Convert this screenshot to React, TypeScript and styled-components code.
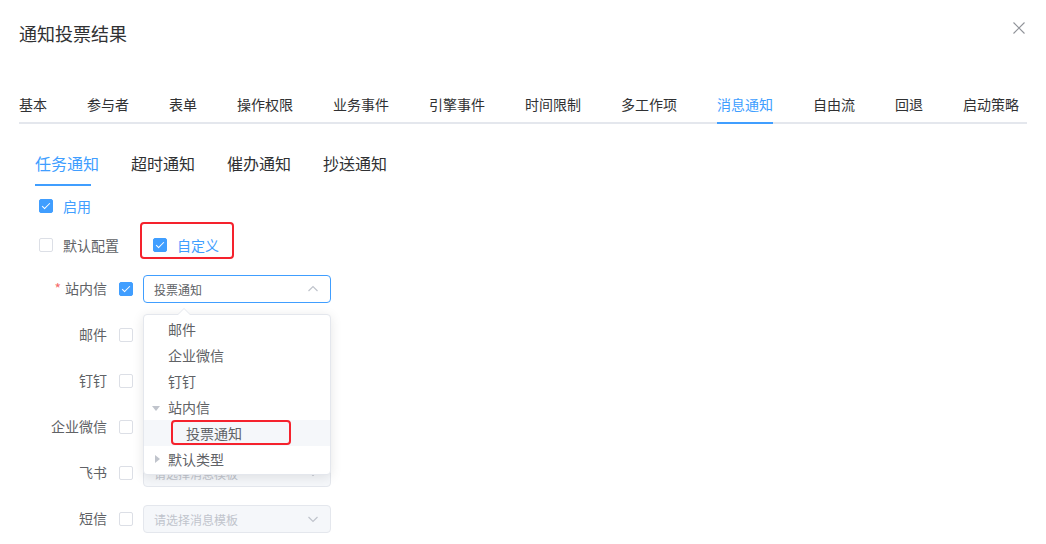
import React from "react";
import styled, { createGlobalStyle, css } from "styled-components";

const BLUE = "#409eff";

const GlobalStyle = createGlobalStyle`
  body {
    margin: 0;
    background: #fff;
    font-family: "Noto Sans CJK SC", "Noto Sans", sans-serif;
  }
  * { box-sizing: border-box; }
`;

const Dialog = styled.div`
  width: 1046px;
  height: 544px;
  padding: 0 19px;
  overflow: hidden;
  background: #fff;
`;

const Header = styled.div`
  height: 66px;
  display: flex;
  align-items: center;
  justify-content: space-between;
`;

const Title = styled.span`
  font-size: 18px;
  line-height: 24px;
  color: #303133;
`;

const CloseButton = styled.button`
  border: 0;
  background: none;
  padding: 0;
  margin: -10px 2px 0 0;
  width: 12px;
  height: 12px;
  color: #909399;
  cursor: pointer;
  display: flex;
`;

const TabNav = styled.div`
  margin-top: 18px;
  display: flex;
  height: 40px;
  box-shadow: inset 0 -2px 0 #e4e7ed;
`;

const TabItem = styled.div<{ $active?: boolean }>`
  position: relative;
  height: 40px;
  line-height: 40px;
  padding: 0 20px;
  font-size: 14px;
  color: ${(p) => (p.$active ? BLUE : "#303133")};
  &:first-child { padding-left: 0; }
  &:last-child { padding-right: 0; }
  ${(p) =>
    p.$active &&
    css`
      &::after {
        content: "";
        position: absolute;
        left: 20px;
        right: 20px;
        bottom: 0;
        height: 2px;
        background: ${BLUE};
      }
    `}
`;

const SubTabNav = styled.div`
  margin-top: 17px;
  padding-left: 16px;
  display: flex;
  height: 45px;
`;

const SubTab = styled.div<{ $active?: boolean }>`
  position: relative;
  line-height: 44px;
  padding: 0 16px;
  font-size: 16px;
  color: ${(p) => (p.$active ? BLUE : "#303133")};
  &:first-child { padding-left: 0; }
  ${(p) =>
    p.$active &&
    css`
      &::after {
        content: "";
        position: absolute;
        left: 0;
        width: 56px;
        bottom: 0;
        height: 2px;
        background: ${BLUE};
      }
    `}
`;

const CheckRow = styled.div<{ $top: number }>`
  margin-top: ${(p) => p.$top}px;
  padding-left: 20px;
  height: 20px;
  display: flex;
  align-items: center;
`;

const CheckWrap = styled.label<{ $offset?: number }>`
  position: relative;
  display: inline-flex;
  align-items: center;
  margin-left: ${(p) => p.$offset ?? 0}px;
`;

const Box = styled.span<{ $checked?: boolean }>`
  position: relative;
  width: 14px;
  height: 14px;
  border-radius: 2px;
  border: 1px solid ${(p) => (p.$checked ? BLUE : "#dcdfe6")};
  background: ${(p) => (p.$checked ? BLUE : "#fff")};
  flex-shrink: 0;
  ${(p) =>
    p.$checked &&
    css`
      &::after {
        content: "";
        position: absolute;
        left: 4px;
        top: 1px;
        width: 3px;
        height: 7px;
        border: 1px solid #fff;
        border-left: 0;
        border-top: 0;
        transform: rotate(45deg);
      }
    `}
`;

const CheckText = styled.span<{ $checked?: boolean }>`
  margin-left: 10px;
  font-size: 14px;
  line-height: 20px;
  color: ${(p) => (p.$checked ? BLUE : "#606266")};
`;

const Marker = styled.span<{ $inset: string }>`
  position: absolute;
  inset: ${(p) => p.$inset};
  border: 2px solid #f5222d;
  border-radius: 4px;
  pointer-events: none;
`;

const Checkbox = ({
  checked,
  label,
  offset,
  children,
}: {
  checked?: boolean;
  label?: string;
  offset?: number;
  children?: React.ReactNode;
}) => (
  <CheckWrap $offset={offset}>
    <Box $checked={checked} />
    {label && <CheckText $checked={checked}>{label}</CheckText>}
    {children}
  </CheckWrap>
);

const Form = styled.div`
  margin-top: 20px;
`;

const FormItem = styled.div`
  display: flex;
  align-items: center;
  height: 28px;
  margin-bottom: 18px;
`;

const Label = styled.div`
  width: 100px;
  padding-right: 12px;
  text-align: right;
  font-size: 14px;
  line-height: 20px;
  margin-top: -2px;
  color: #606266;
`;

const Required = styled.span`
  color: #f56c6c;
  margin-right: 4px;
`;

const SelectBox = styled.div<{ $focus?: boolean; $disabled?: boolean }>`
  position: relative;
  margin-left: 10px;
  width: 188px;
  height: 28px;
  border-radius: 4px;
  border: 1px solid ${(p) => (p.$focus ? BLUE : p.$disabled ? "#e4e7ed" : "#dcdfe6")};
  background: ${(p) => (p.$disabled ? "#f5f7fa" : "#fff")};
  display: flex;
  align-items: center;
  justify-content: space-between;
  padding: 0 10px;
  font-size: 12px;
  color: ${(p) => (p.$disabled ? "#c0c4cc" : "#606266")};
`;

const Chevron = styled.svg`
  width: 12px;
  height: 12px;
  color: #c0c4cc;
  margin-right: 1px;
`;

const Dropdown = styled.div`
  position: absolute;
  top: calc(100% + 12px);
  left: -1px;
  width: 188px;
  padding: 1px 0 2px;
  background: #fff;
  border: 1px solid #e4e7ed;
  border-radius: 4px;
  box-shadow: 0 2px 12px rgba(0, 0, 0, 0.1);
  z-index: 10;
  &::before,
  &::after {
    content: "";
    position: absolute;
    left: 34px;
    border: 6px solid transparent;
    border-top-width: 0;
  }
  &::before {
    top: -7px;
    border-bottom-color: #e4e7ed;
  }
  &::after {
    top: -6px;
    border-bottom-color: #fff;
  }
`;

const Node = styled.div<{ $level: number; $current?: boolean }>`
  position: relative;
  height: 26px;
  display: flex;
  align-items: center;
  padding-left: ${(p) => (p.$level - 1) * 18}px;
  font-size: 14px;
  color: #606266;
  background: ${(p) => (p.$current ? "#f5f7fa" : "transparent")};
`;

const Caret = styled.span<{ $dir?: "down" | "right" }>`
  width: 24px;
  height: 26px;
  display: flex;
  align-items: center;
  justify-content: center;
  &::before {
    content: "";
    display: ${(p) => (p.$dir ? "block" : "none")};
    border: 4px solid transparent;
    ${(p) =>
      p.$dir === "down"
        ? css`
            border-top: 5px solid #c0c4cc;
            border-bottom: 0;
            margin-top: 2px;
          `
        : css`
            border-left: 5px solid #c0c4cc;
            border-right: 0;
            margin-left: 2px;
          `}
  }
`;

const ChevronIcon = ({ up }: { up?: boolean }) => (
  <Chevron viewBox="0 0 12 12" fill="none" stroke="currentColor" strokeWidth="1.2">
    <path d={up ? "M1.5 8 L6 3.5 L10.5 8" : "M1.5 4 L6 8.5 L10.5 4"} />
  </Chevron>
);

const tabs = ["基本", "参与者", "表单", "操作权限", "业务事件", "引擎事件", "时间限制", "多工作项", "消息通知", "自由流", "回退", "启动策略"];
const subTabs = ["任务通知", "超时通知", "催办通知", "抄送通知"];
const channels = ["邮件", "钉钉", "企业微信", "飞书", "短信"];

export default function App() {
  return (
    <>
      <GlobalStyle />
      <Dialog>
        <Header>
          <Title>通知投票结果</Title>
          <CloseButton aria-label="关闭">
            <svg viewBox="0 0 12 12" width="12" height="12" stroke="currentColor" strokeWidth="1.1">
              <path d="M0.5 0.5 L11.5 11.5 M11.5 0.5 L0.5 11.5" />
            </svg>
          </CloseButton>
        </Header>

        <TabNav>
          {tabs.map((t) => (
            <TabItem key={t} $active={t === "消息通知"}>
              {t}
            </TabItem>
          ))}
        </TabNav>

        <SubTabNav>
          {subTabs.map((t, i) => (
            <SubTab key={t} $active={i === 0}>
              {t}
            </SubTab>
          ))}
        </SubTabNav>

        <CheckRow $top={10}>
          <Checkbox checked label="启用" />
        </CheckRow>
        <CheckRow $top={19}>
          <Checkbox label="默认配置" />
          <Checkbox checked label="自定义" offset={34}>
            <Marker $inset="-13px -15px -4px -13px" />
          </Checkbox>
        </CheckRow>

        <Form>
          <FormItem>
            <Label>
              <Required>*</Required>站内信
            </Label>
            <Checkbox checked />
            <SelectBox $focus>
              <span>投票通知</span>
              <ChevronIcon up />
              <Dropdown>
                <Node $level={1}><Caret />邮件</Node>
                <Node $level={1}><Caret />企业微信</Node>
                <Node $level={1}><Caret />钉钉</Node>
                <Node $level={1}><Caret $dir="down" />站内信</Node>
                <Node $level={2} $current>
                  <Caret />投票通知
                  <Marker $inset="0 auto 1px 27px" style={{ width: 120 }} />
                </Node>
                <Node $level={1}><Caret $dir="right" />默认类型</Node>
              </Dropdown>
            </SelectBox>
          </FormItem>
          {channels.map((c) => (
            <FormItem key={c}>
              <Label>{c}</Label>
              <Checkbox />
              <SelectBox $disabled>
                <span>请选择消息模板</span>
                <ChevronIcon />
              </SelectBox>
            </FormItem>
          ))}
        </Form>
      </Dialog>
    </>
  );
}
